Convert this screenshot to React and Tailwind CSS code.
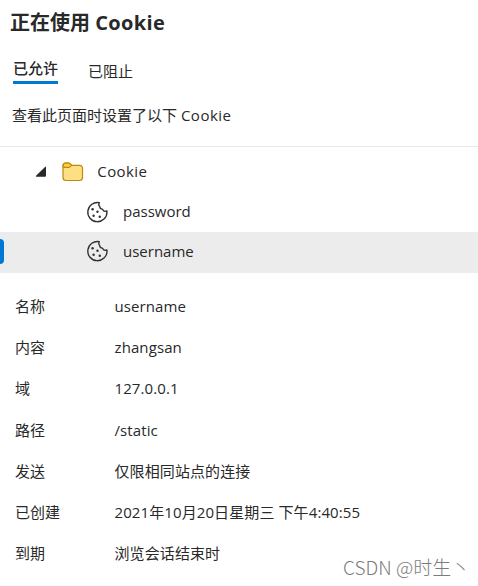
import React from 'react';

const cookieDetails = [
  ['名称', 'username'],
  ['内容', 'zhangsan'],
  ['域', '127.0.0.1'],
  ['路径', '/static'],
  ['发送', '仅限相同站点的连接'],
  ['已创建', '2021年10月20日星期三 下午4:40:55'],
  ['到期', '浏览会话结束时'],
];

function CookieIcon() {
  return (
    <svg className="h-[22px] w-[22px] shrink-0" viewBox="0 0 22 22" fill="none">
      <path
        d="M13.3 1.7A9.6 9.6 0 1 0 21 11Q21 10.4 20.9 9.9Q18 11.3 16.5 8.2Q13.9 8.2 13.7 5.5Q12.1 3.9 13.3 1.7Z"
        stroke="#303030"
        strokeWidth="1.35"
        strokeLinejoin="round"
      />
      <g fill="#303030">
        <circle cx="6.6" cy="8.3" r="1.2" />
        <circle cx="11.5" cy="10.8" r="1.2" />
        <circle cx="7.6" cy="14.7" r="1.2" />
        <circle cx="13.8" cy="15.8" r="1.2" />
      </g>
    </svg>
  );
}

function FolderIcon() {
  return (
    <svg className="ml-[15px] h-5 w-[22px]" viewBox="0 0 22 20" fill="none">
      <path
        d="M1 5V15.5Q1 18.5 4 18.5H17.5Q20.5 18.5 20.5 15.5V6.5Q20.5 3.3 17.5 3.3H9.5L8 1.9Q7.2 1.2 6 1.2H3.8Q1 1.2 1 4Z"
        fill="#ffdf84"
        stroke="#ba8b0c"
        strokeWidth="1.2"
      />
      <path
        d="M1 3.8Q1 1.2 3.8 1.2H6.5Q7.5 1.2 8.3 2L9.7 3.3L8.3 4.6Q7.5 5.4 6.5 5.4H3Q1 5.4 1 3.8Z"
        fill="#ffd03b"
        stroke="#ba8b0c"
        strokeWidth="1.2"
      />
    </svg>
  );
}

export default function App() {
  return (
    <main className="relative flex h-[586px] w-[478px] flex-col overflow-hidden bg-white font-['Open_Sans','Noto_Sans_CJK_SC',sans-serif] text-[15px] leading-5 font-normal text-[#292929]">
      <header className="flex h-[147px] shrink-0 flex-col border-b border-[#e8e8e8]">
        <h1 className="mt-[9px] ml-[10px] text-[20px] leading-7 font-bold whitespace-nowrap">
          正在使用 <span className="tracking-[0.35px]">Cookie</span>
        </h1>
        <nav className="mt-[21px] ml-[13px] flex h-[26px] items-start gap-[30px]">
          <button className="flex h-[26px] w-[45px] items-start border-b-[3px] border-[#0078d4] font-medium whitespace-nowrap">已允许</button>
          <span className="mt-[3px]">已阻止</span>
        </nav>
        <p className="mt-[21px] ml-[12px] whitespace-nowrap">
          查看此页面时设置了以下 <span className="tracking-[0.5px]">Cookie</span>
        </p>
      </header>
      <section className="flex shrink-0 flex-col">
        <div className="flex h-[45px] items-center pt-[5px] pl-[35px]">
          <svg className="h-3 w-3" viewBox="0 0 12 12">
            <path d="M10 .9Q11 .1 11 1.6V9.8Q11 10.8 10 10.8H1.5Q.2 10.8 1 9.8Z" fill="#292929" />
          </svg>
          <FolderIcon />
          <span className="mb-0.5 ml-[13.3px] tracking-[0.4px]">Cookie</span>
        </div>
        <div className="flex h-10 items-center pb-px pl-[86px]">
          <CookieIcon />
          <span className="mb-px ml-[15px]">password</span>
        </div>
        <div className="flex h-[41px] items-center bg-[#ececec]">
          <span className="mb-0.5 h-[25px] w-1 rounded-r-sm bg-[#0078d4]" />
          <span className="mb-[3px] ml-[82px] flex items-center gap-[15px]">
            <CookieIcon />
            <span>username</span>
          </span>
        </div>
      </section>
      <dl className="mt-[12.45px] grid auto-rows-[41.2px] grid-cols-[99.5px_1fr] items-center pl-[15px]">
        {cookieDetails.map(([label, value]) => (
          <React.Fragment key={label}>
            <dt>{label}</dt>
            <dd className="tracking-[0.1px] whitespace-nowrap">{value}</dd>
          </React.Fragment>
        ))}
      </dl>
      <span className="absolute top-[555px] left-[343px] font-['Noto_Sans_CJK_SC',sans-serif] text-[19px] leading-6 font-light whitespace-nowrap text-[#7c7c7c]">
        CSDN @时生丶
      </span>
    </main>
  );
}
